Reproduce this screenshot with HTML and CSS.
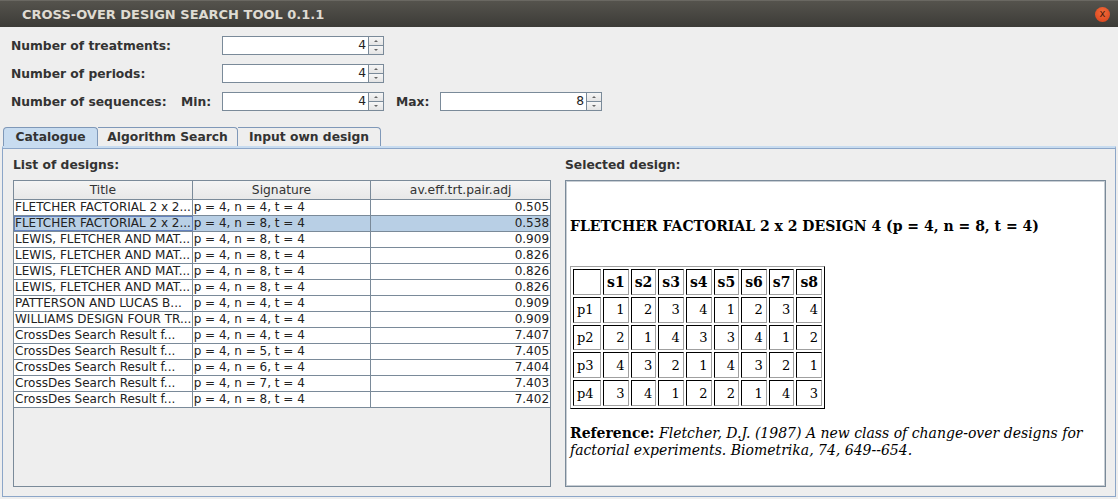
FILE: index.html
```html
<!DOCTYPE html>
<html>
<head>
<meta charset="utf-8">
<link rel="stylesheet" href="styles.css">
</head>
<body>
<div class="window">
  <div class="titlebar">
    <span class="title">CROSS-OVER DESIGN SEARCH TOOL 0.1.1</span>
    <span class="close">x</span>
  </div>
  <div class="form">
    <div class="row">
      <span class="label">Number of treatments:</span>
      <div class="spinner"><div class="field">4</div><div class="btns"><div class="up"></div><div class="down"></div></div></div>
    </div>
    <div class="row">
      <span class="label">Number of periods:</span>
      <div class="spinner"><div class="field">4</div><div class="btns"><div class="up"></div><div class="down"></div></div></div>
    </div>
    <div class="row">
      <span class="label seq">Number of sequences:</span>
      <span class="label min">Min:</span>
      <div class="spinner"><div class="field">4</div><div class="btns"><div class="up"></div><div class="down"></div></div></div>
      <span class="label max">Max:</span>
      <div class="spinner"><div class="field">8</div><div class="btns"><div class="up"></div><div class="down"></div></div></div>
    </div>
  </div>
  <div class="tabs">
    <div class="tab active">Catalogue</div>
    <div class="tab t2">Algorithm Search</div>
    <div class="tab t3">Input own design</div>
  </div>
  <div class="panel">
    <div class="col left">
      <div class="heading">List of designs:</div>
      <div class="tablebox">
        <div class="thead">
          <div class="c c1">Title</div>
          <div class="c c2">Signature</div>
          <div class="c c3">av.eff.trt.pair.adj</div>
        </div>
        <div class="tr"><div class="c c1">FLETCHER FACTORIAL 2 x 2...</div><div class="c c2">p = 4, n = 4, t = 4</div><div class="c c3">0.505</div></div>
        <div class="tr sel"><div class="c c1 focus">FLETCHER FACTORIAL 2 x 2...</div><div class="c c2">p = 4, n = 8, t = 4</div><div class="c c3">0.538</div></div>
        <div class="tr"><div class="c c1">LEWIS, FLETCHER AND MAT...</div><div class="c c2">p = 4, n = 8, t = 4</div><div class="c c3">0.909</div></div>
        <div class="tr"><div class="c c1">LEWIS, FLETCHER AND MAT...</div><div class="c c2">p = 4, n = 8, t = 4</div><div class="c c3">0.826</div></div>
        <div class="tr"><div class="c c1">LEWIS, FLETCHER AND MAT...</div><div class="c c2">p = 4, n = 8, t = 4</div><div class="c c3">0.826</div></div>
        <div class="tr"><div class="c c1">LEWIS, FLETCHER AND MAT...</div><div class="c c2">p = 4, n = 8, t = 4</div><div class="c c3">0.826</div></div>
        <div class="tr"><div class="c c1">PATTERSON AND LUCAS B...</div><div class="c c2">p = 4, n = 4, t = 4</div><div class="c c3">0.909</div></div>
        <div class="tr"><div class="c c1">WILLIAMS DESIGN FOUR TR...</div><div class="c c2">p = 4, n = 4, t = 4</div><div class="c c3">0.909</div></div>
        <div class="tr"><div class="c c1">CrossDes Search Result f...</div><div class="c c2">p = 4, n = 4, t = 4</div><div class="c c3">7.407</div></div>
        <div class="tr"><div class="c c1">CrossDes Search Result f...</div><div class="c c2">p = 4, n = 5, t = 4</div><div class="c c3">7.405</div></div>
        <div class="tr"><div class="c c1">CrossDes Search Result f...</div><div class="c c2">p = 4, n = 6, t = 4</div><div class="c c3">7.404</div></div>
        <div class="tr"><div class="c c1">CrossDes Search Result f...</div><div class="c c2">p = 4, n = 7, t = 4</div><div class="c c3">7.403</div></div>
        <div class="tr"><div class="c c1">CrossDes Search Result f...</div><div class="c c2">p = 4, n = 8, t = 4</div><div class="c c3">7.402</div></div>
      </div>
    </div>
    <div class="col right">
      <div class="heading">Selected design:</div>
      <div class="htmlbox">
        <div class="dtitle">FLETCHER FACTORIAL 2 x 2 DESIGN 4 (p = 4, n = 8, t = 4)</div>
        <table class="design">
          <tr><th></th><th>s1</th><th>s2</th><th>s3</th><th>s4</th><th>s5</th><th>s6</th><th>s7</th><th>s8</th></tr>
          <tr><td class="p">p1</td><td>1</td><td>2</td><td>3</td><td>4</td><td>1</td><td>2</td><td>3</td><td>4</td></tr>
          <tr><td class="p">p2</td><td>2</td><td>1</td><td>4</td><td>3</td><td>3</td><td>4</td><td>1</td><td>2</td></tr>
          <tr><td class="p">p3</td><td>4</td><td>3</td><td>2</td><td>1</td><td>4</td><td>3</td><td>2</td><td>1</td></tr>
          <tr><td class="p">p4</td><td>3</td><td>4</td><td>1</td><td>2</td><td>2</td><td>1</td><td>4</td><td>3</td></tr>
        </table>
        <p class="ref"><b>Reference:</b> <i>Fletcher, D.J. (1987) A new class of change-over designs for factorial experiments. Biometrika, 74, 649--654.</i></p>
      </div>
    </div>
  </div>
</div>
</body>
</html>
```

FILE: styles.css
```css
html, body {
  margin: 0;
  padding: 0;
  background: #eeeeee;
}
.window {
  width: 1118px;
  height: 499px;
  overflow: hidden;
  display: flex;
  flex-direction: column;
  background: #eeeeee;
  font-family: "DejaVu Sans", sans-serif;
  font-size: 12.3px;
  color: #333333;
}
.titlebar {
  height: 27px;
  flex: none;
  display: flex;
  align-items: center;
  justify-content: space-between;
  padding: 0 8px 0 22px;
  background: linear-gradient(#55534d, #3c3b37);
  border-top: 1px solid #6a6862;
  box-sizing: border-box;
}
.title {
  color: #dfdbd2;
  font-weight: bold;
  font-size: 13px;
}
.close {
  width: 15px;
  height: 15px;
  border-radius: 50%;
  background: radial-gradient(circle at 50% 35%, #f26b3a, #d8401a);
  color: #4a1a0a;
  font-size: 10px;
  line-height: 14px;
  text-align: center;
}
.form {
  padding: 9px 0 0 11px;
  display: flex;
  flex-direction: column;
  gap: 9px;
}
.row {
  display: flex;
  align-items: center;
  height: 19px;
}
.label {
  font-weight: bold;
  color: #333333;
  width: 211px;
  flex: none;
  white-space: nowrap;
}
.label.seq {
  width: 170px;
}
.label.min {
  width: 41px;
}
.label.max {
  width: 44px;
  margin-left: 12px;
}
.spinner {
  display: flex;
  height: 19px;
  flex: none;
}
.field {
  width: 146px;
  height: 19px;
  box-sizing: border-box;
  background: #ffffff;
  border: 1px solid #7a8a99;
  border-right: none;
  text-align: right;
  padding-right: 2px;
  line-height: 17px;
  color: #222;
}
.btns {
  width: 16px;
  height: 19px;
  display: flex;
  flex-direction: column;
}
.up, .down {
  flex: 1;
  border: 1px solid #7a8a99;
  background: linear-gradient(#f6f6f6, #e4e4e4);
  position: relative;
}
.down {
  margin-top: -1px;
}
.up::after, .down::after {
  content: "";
  position: absolute;
  left: 5px;
  top: 3px;
  border-left: 2px solid transparent;
  border-right: 2px solid transparent;
}
.up::after {
  border-bottom: 2px solid #666;
}
.down::after {
  border-top: 2px solid #666;
}
.tabs {
  margin-top: 16px;
  padding-left: 3px;
  display: flex;
  height: 19px;
  flex: none;
}
.tab {
  height: 19px;
  box-sizing: border-box;
  border: 1px solid #7f98b8;
  border-bottom: none;
  border-left: none;
  border-top-right-radius: 4px;
  font-weight: bold;
  line-height: 18px;
  color: #333;
  background: #eeeeee;
  text-align: center;
  white-space: nowrap;
}
.tab.active {
  background: #c8dcf0;
  border-left: 1px solid #7f98b8;
  border-top-left-radius: 4px;
  width: 95px;
}
.tab.t2 {
  width: 140px;
}
.tab.t3 {
  width: 143px;
}
.panel {
  flex: 1;
  margin: 0 2px 2px 2px;
  border: 1px solid #8ca6c8;
  border-top: 2px solid #c8dcf0;
  box-shadow: inset 0 1px 0 #8ca6c8;
  display: flex;
  gap: 14px;
  padding: 9px 9px 9px 10px;
  min-height: 0;
}
.col {
  display: flex;
  flex-direction: column;
  min-width: 0;
}
.left {
  width: 539px;
}
.right {
  width: 542px;
}
.heading {
  font-weight: bold;
  color: #333;
  height: 16px;
  line-height: 16px;
  margin-bottom: 7px;
}
.tablebox {
  flex: 1;
  border: 1px solid #7a8a99;
  background: #eeeeee;
}
.thead, .tr {
  display: flex;
  height: 15px;
  border-bottom: 1px solid #7a8a99;
}
.thead {
  height: 18px;
  background: linear-gradient(#f4f4f4, #e8e8e8);
}
.tr {
  background: #ffffff;
}
.tr.sel {
  background: #b8cfe5;
}
.c {
  box-sizing: border-box;
  border-right: 1px solid #7a8a99;
  white-space: nowrap;
  overflow: hidden;
  line-height: 15px;
  padding: 0 1px;
  color: #222;
}
.tr .c {
  font-size: 12px;
}
.thead .c {
  text-align: center;
  line-height: 18px;
  color: #333;
}
.c1 { width: 179px; }
.c2 { width: 179px; }
.c3 { width: 179px; text-align: right; border-right: none; }
.focus {
  outline: 1px solid #6382bf;
  outline-offset: -1px;
}
.htmlbox {
  flex: 1;
  background: #ffffff;
  border: 1px solid #7a8a99;
  box-shadow: inset 0 0 0 1px #c8ced4;
  padding: 0 4px;
  font-family: "DejaVu Serif", serif;
  color: #000;
  font-size: 14px;
}
.dtitle {
  font-weight: bold;
  margin-top: 37px;
  margin-bottom: 31px;
  line-height: 17px;
}
.design {
  border: 1px solid;
  border-color: #a0a0a0 #000 #000 #a0a0a0;
  border-spacing: 2px;
  font-size: 13px;
}
.design th, .design td {
  border: 1px solid;
  border-color: #000 #a0a0a0 #a0a0a0 #000;
  height: 21.8px;
  padding: 1px 3px;
}
.design th {
  width: 17px;
  font-size: 14px;
}
.design th:first-child {
  width: 20px;
}
.design td {
  text-align: right;
}
.design td.p {
  text-align: left;
}
.ref {
  margin: 16px 0 0 0;
  line-height: 17px;
  font-size: 14px;
}
```
